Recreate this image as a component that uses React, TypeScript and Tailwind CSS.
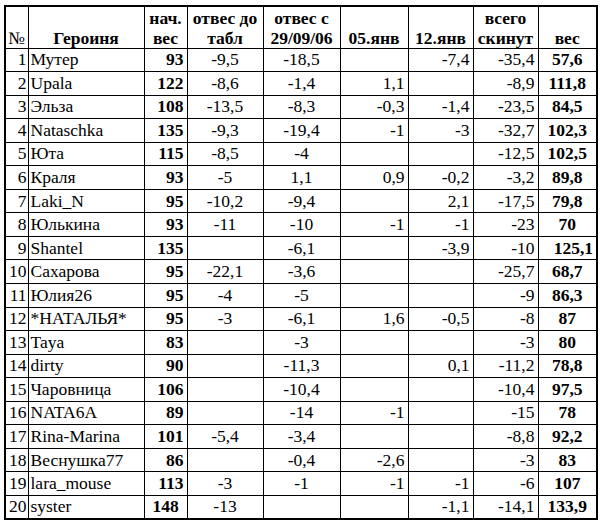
import React from "react";

type Row = [string, string, string, string, string, string, string, string, string];

const rows: Row[] = [
  ["1", "Мутер", "93", "-9,5", "-18,5", "", "-7,4", "-35,4", "57,6"],
  ["2", "Upala", "122", "-8,6", "-1,4", "1,1", "", "-8,9", "111,8"],
  ["3", "Эльза", "108", "-13,5", "-8,3", "-0,3", "-1,4", "-23,5", "84,5"],
  ["4", "Nataschka", "135", "-9,3", "-19,4", "-1", "-3", "-32,7", "102,3"],
  ["5", "Юта", "115", "-8,5", "-4", "", "", "-12,5", "102,5"],
  ["6", "Краля", "93", "-5", "1,1", "0,9", "-0,2", "-3,2", "89,8"],
  ["7", "Laki_N", "95", "-10,2", "-9,4", "", "2,1", "-17,5", "79,8"],
  ["8", "Юлькина", "93", "-11", "-10", "-1", "-1", "-23", "70"],
  ["9", "Shantel", "135", "", "-6,1", "", "-3,9", "-10", "125,1"],
  ["10", "Сахарова", "95", "-22,1", "-3,6", "", "", "-25,7", "68,7"],
  ["11", "Юлия26", "95", "-4", "-5", "", "", "-9", "86,3"],
  ["12", "*НАТАЛЬЯ*", "95", "-3", "-6,1", "1,6", "-0,5", "-8", "87"],
  ["13", "Taya", "83", "", "-3", "", "", "-3", "80"],
  ["14", "dirty", "90", "", "-11,3", "", "0,1", "-11,2", "78,8"],
  ["15", "Чаровница", "106", "", "-10,4", "", "", "-10,4", "97,5"],
  ["16", "NATA6A", "89", "", "-14", "-1", "", "-15", "78"],
  ["17", "Rina-Marina", "101", "-5,4", "-3,4", "", "", "-8,8", "92,2"],
  ["18", "Веснушка77", "86", "", "-0,4", "-2,6", "", "-3", "83"],
  ["19", "lara_mouse", "113", "-3", "-1", "-1", "-1", "-6", "107"],
  ["20", "syster", "148", "-13", "", "", "-1,1", "-14,1", "133,9"],
];

const td = "border border-black h-[23.55px] p-0 align-middle leading-[19px] whitespace-nowrap";

export default function App() {
  return (
    <div className="w-[600px] h-[527px] bg-white pt-[5px] pl-[4px]" style={{ fontFamily: '"Liberation Serif", "Times New Roman", serif' }}>
      <table className="table-fixed border-collapse border-2 border-black text-[17.5px] text-black w-[592px]">
        <colgroup>
          <col className="w-[23px]" />
          <col className="w-[116px]" />
          <col className="w-[43px]" />
          <col className="w-[76px]" />
          <col className="w-[77px]" />
          <col className="w-[68px]" />
          <col className="w-[65px]" />
          <col className="w-[65px]" />
          <col className="w-[59px]" />
        </colgroup>
        <thead>
          <tr className="font-bold">
            <th className="border border-black h-[42px] p-0 align-bottom leading-[20px] font-normal text-center">№</th>
            <th className="border border-black p-0 align-bottom leading-[20px] text-center">Героиня</th>
            <th className="border border-black p-0 align-bottom leading-[20px] text-center">нач.<br />вес</th>
            <th className="border border-black p-0 align-bottom leading-[20px] text-center">отвес до<br />табл</th>
            <th className="border border-black p-0 align-bottom leading-[20px] text-center">отвес с<br />29/09/06</th>
            <th className="border border-black p-0 align-bottom leading-[20px] text-center">05.янв</th>
            <th className="border border-black p-0 align-bottom leading-[20px] text-center">12.янв</th>
            <th className="border border-black p-0 align-bottom leading-[20px] text-center">всего<br />скинут</th>
            <th className="border border-black p-0 align-bottom leading-[20px] text-center">вес</th>
          </tr>
        </thead>
        <tbody>
          {rows.map((r, i) => (
            <tr key={i}>
              <td className={`${td} text-right pr-[1px]`}>{r[0]}</td>
              <td className={`${td} text-left pl-[2px]`}>{r[1]}</td>
              <td className={`${td} font-bold ${i === 19 ? "text-center" : "text-right pr-[3px]"}`}>{r[2]}</td>
              <td className={`${td} text-center`}>{r[3]}</td>
              <td className={`${td} text-center`}>{r[4]}</td>
              <td className={`${td} text-right pr-[3px]`}>{r[5]}</td>
              <td className={`${td} text-right pr-[3px]`}>{r[6]}</td>
              <td className={`${td} text-right pr-[3px]`}>{r[7]}</td>
              <td className={`${td} font-bold ${i === 8 ? "text-right pr-[3px]" : "text-center"}`}>{r[8]}</td>
            </tr>
          ))}
        </tbody>
      </table>
    </div>
  );
}
